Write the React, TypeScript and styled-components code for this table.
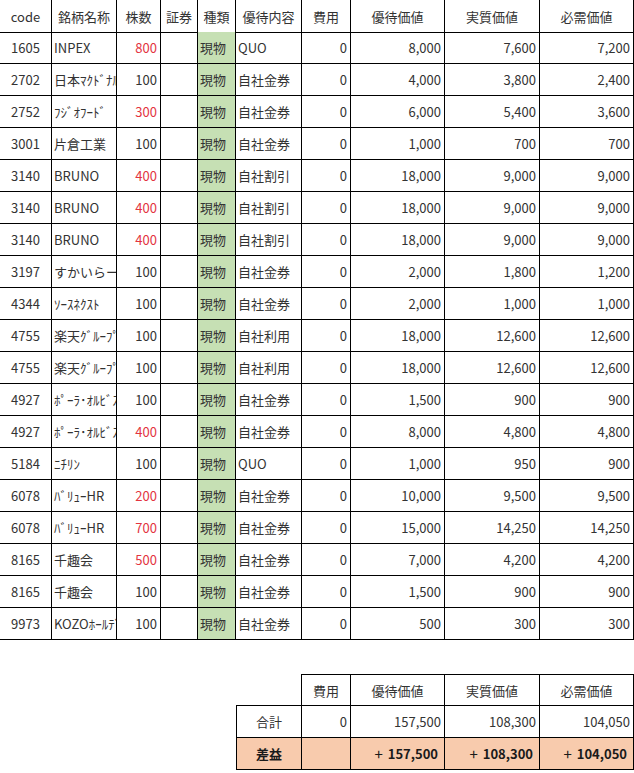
import React from 'react';
import styled, { createGlobalStyle, css } from 'styled-components';

const GlobalStyle = createGlobalStyle`
  html, body {
    margin: 0;
    padding: 0;
    background: #ffffff;
  }
  body {
    font-family: "Noto Sans CJK JP", "Noto Sans", sans-serif;
    font-size: 13px;
    color: #333333;
  }
`;

const COLUMNS = '52px 65px 44px 37px 38px 66px 49px 94px 95px 94px';
const LINE = '#000000';

const Sheet = styled.div`
  width: 634px;
`;

const Grid = styled.div<{ $gapTop?: number }>`
  display: grid;
  grid-template-columns: ${COLUMNS};
  grid-auto-rows: 32px;
  margin-top: ${(p) => p.$gapTop ?? 0}px;
`;

type Align = 'left' | 'center' | 'right';

const Cell = styled.div<{
  $align?: Align;
  $fill?: string;
  $red?: boolean;
  $bold?: boolean;
  $top?: boolean;
  $left?: boolean;
  $pad?: number;
  $tall?: boolean;
}>`
  box-sizing: border-box;
  display: flex;
  align-items: center;
  justify-content: ${(p) =>
    p.$align === 'left' ? 'flex-start' : p.$align === 'right' ? 'flex-end' : 'center'};
  padding: 0 ${(p) => p.$pad ?? 3}px 0 ${(p) => (p.$align === 'left' ? 2 : 3)}px;
  white-space: nowrap;
  overflow: hidden;
  background: ${(p) => p.$fill ?? 'transparent'};
  color: ${(p) => (p.$red ? '#e3343f' : p.$bold ? '#1a1a1a' : '#333333')};
  font-weight: ${(p) => (p.$bold ? 700 : 400)};
  border-right: 1px solid ${LINE};
  border-bottom: 1px solid ${LINE};
  ${(p) => p.$tall && css`height: 33px;`}
  ${(p) => p.$top && css`border-top: 1px solid ${LINE};`}
  ${(p) => p.$left && css`border-left: 1px solid ${LINE};`}
`;

const Plus = styled.span`
  font-weight: 400;
  font-size: 15px;
  margin-right: 5px;
`;

const Spacer = styled.div`
  grid-column: span 5;
`;

const Row = styled.div`
  display: contents;
`;

const GREEN = '#c6e0b4';
const ORANGE = '#f8cbad';

type Holding = {
  code: string;
  name: string;
  shares: number;
  benefit: string;
  value: number;
  real: number;
  need: number;
};

const holdings: Holding[] = [
  { code: '1605', name: 'INPEX', shares: 800, benefit: 'QUO', value: 8000, real: 7600, need: 7200 },
  { code: '2702', name: '日本ﾏｸﾄﾞﾅﾙﾄﾞ', shares: 100, benefit: '自社金券', value: 4000, real: 3800, need: 2400 },
  { code: '2752', name: 'ﾌｼﾞｵﾌｰﾄﾞ', shares: 300, benefit: '自社金券', value: 6000, real: 5400, need: 3600 },
  { code: '3001', name: '片倉工業', shares: 100, benefit: '自社金券', value: 1000, real: 700, need: 700 },
  { code: '3140', name: 'BRUNO', shares: 400, benefit: '自社割引', value: 18000, real: 9000, need: 9000 },
  { code: '3140', name: 'BRUNO', shares: 400, benefit: '自社割引', value: 18000, real: 9000, need: 9000 },
  { code: '3140', name: 'BRUNO', shares: 400, benefit: '自社割引', value: 18000, real: 9000, need: 9000 },
  { code: '3197', name: 'すかいらーく', shares: 100, benefit: '自社金券', value: 2000, real: 1800, need: 1200 },
  { code: '4344', name: 'ｿｰｽﾈｸｽﾄ', shares: 100, benefit: '自社金券', value: 2000, real: 1000, need: 1000 },
  { code: '4755', name: '楽天ｸﾞﾙｰﾌﾟ', shares: 100, benefit: '自社利用', value: 18000, real: 12600, need: 12600 },
  { code: '4755', name: '楽天ｸﾞﾙｰﾌﾟ', shares: 100, benefit: '自社利用', value: 18000, real: 12600, need: 12600 },
  { code: '4927', name: 'ﾎﾟｰﾗ･ｵﾙﾋﾞｽ', shares: 100, benefit: '自社金券', value: 1500, real: 900, need: 900 },
  { code: '4927', name: 'ﾎﾟｰﾗ･ｵﾙﾋﾞｽ', shares: 400, benefit: '自社金券', value: 8000, real: 4800, need: 4800 },
  { code: '5184', name: 'ﾆﾁﾘﾝ', shares: 100, benefit: 'QUO', value: 1000, real: 950, need: 900 },
  { code: '6078', name: 'ﾊﾞﾘｭｰHR', shares: 200, benefit: '自社金券', value: 10000, real: 9500, need: 9500 },
  { code: '6078', name: 'ﾊﾞﾘｭｰHR', shares: 700, benefit: '自社金券', value: 15000, real: 14250, need: 14250 },
  { code: '8165', name: '千趣会', shares: 500, benefit: '自社金券', value: 7000, real: 4200, need: 4200 },
  { code: '8165', name: '千趣会', shares: 100, benefit: '自社金券', value: 1500, real: 900, need: 900 },
  { code: '9973', name: 'KOZOﾎｰﾙﾃﾞｨﾝｸﾞｽ', shares: 100, benefit: '自社金券', value: 500, real: 300, need: 300 },
];

const fmt = (n: number) => n.toLocaleString('en-US');

const headers = ['code', '銘柄名称', '株数', '証券', '種類', '優待内容', '費用', '優待価値', '実質価値', '必需価値'];

export default function App() {
  const total = holdings.reduce(
    (acc, r) => ({ value: acc.value + r.value, real: acc.real + r.real, need: acc.need + r.need }),
    { value: 0, real: 0, need: 0 }
  );

  return (
    <Sheet>
      <GlobalStyle />
      <Grid>
        <Row>
          {headers.map((h) => (
            <Cell key={h} $tall>
              {h}
            </Cell>
          ))}
        </Row>
        {holdings.map((r, i) => (
          <Row key={i}>
            <Cell>{r.code}</Cell>
            <Cell $align="left">{r.name}</Cell>
            <Cell $align="right" $red={r.shares !== 100}>
              {r.shares}
            </Cell>
            <Cell />
            <Cell $align="left" $fill={GREEN}>
              現物
            </Cell>
            <Cell $align="left">{r.benefit}</Cell>
            <Cell $align="right">0</Cell>
            <Cell $align="right">{fmt(r.value)}</Cell>
            <Cell $align="right">{fmt(r.real)}</Cell>
            <Cell $align="right">{fmt(r.need)}</Cell>
          </Row>
        ))}
      </Grid>

      <Grid $gapTop={34}>
        <Row>
          <Spacer />
          <Cell />
          <Cell $top>費用</Cell>
          <Cell $top>優待価値</Cell>
          <Cell $top>実質価値</Cell>
          <Cell $top>必需価値</Cell>
        </Row>

        <Row>
          <Spacer />
          <Cell $left>合計</Cell>
          <Cell $align="right">0</Cell>
          <Cell $align="right">{fmt(total.value)}</Cell>
          <Cell $align="right">{fmt(total.real)}</Cell>
          <Cell $align="right">{fmt(total.need)}</Cell>
        </Row>

        <Row>
          <Spacer />
          <Cell $left $fill={ORANGE} $bold>
            差益
          </Cell>
          <Cell $fill={ORANGE} />
          <Cell $align="right" $fill={ORANGE} $bold $pad={6}>
            <Plus>+</Plus>
            {fmt(total.value)}
          </Cell>
          <Cell $align="right" $fill={ORANGE} $bold $pad={6}>
            <Plus>+</Plus>
            {fmt(total.real)}
          </Cell>
          <Cell $align="right" $fill={ORANGE} $bold $pad={6}>
            <Plus>+</Plus>
            {fmt(total.need)}
          </Cell>
        </Row>
      </Grid>
    </Sheet>
  );
}
